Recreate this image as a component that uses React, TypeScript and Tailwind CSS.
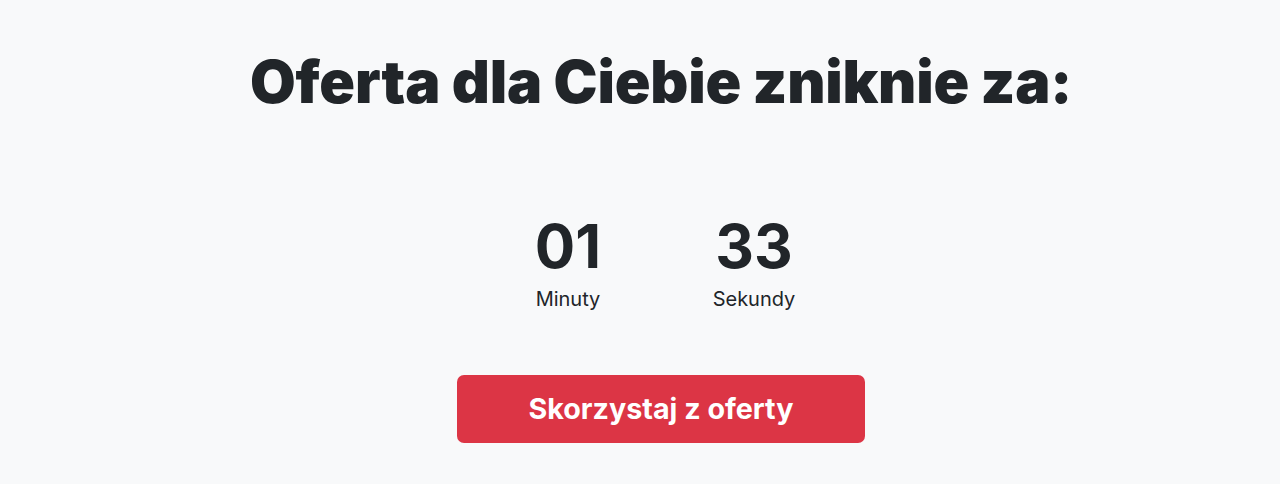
import React from "react";

export default function App() {
  return (
    <div className="w-[1280px] h-[484px] bg-[#f8f9fa] text-[#212529] overflow-hidden" style={{ fontFamily: "Inter, 'Noto Sans', sans-serif" }}>
      <div className="flex flex-col items-center pl-[42px]">
        <h1 className="mt-[44px] text-[59px] leading-[76px] font-black tracking-[-0.2px]">Oferta dla Ciebie zniknie za:</h1>
        <div className="mt-[94px] flex gap-[90px]">
          <div className="flex flex-col items-center w-[96px]">
            <div className="text-[60px] leading-[64px] font-bold">01</div>
            <div className="mt-[7px] text-[20px] leading-[28px]">Minuty</div>
          </div>
          <div className="flex flex-col items-center w-[96px]">
            <div className="text-[60px] leading-[64px] font-bold">33</div>
            <div className="mt-[7px] text-[20px] leading-[28px]">Sekundy</div>
          </div>
        </div>
        <button className="mt-[62px] w-[408px] h-[68px] rounded-[7px] bg-[#dc3545] text-white text-[28.7px] font-bold">Skorzystaj z oferty</button>
      </div>
    </div>
  );
}
